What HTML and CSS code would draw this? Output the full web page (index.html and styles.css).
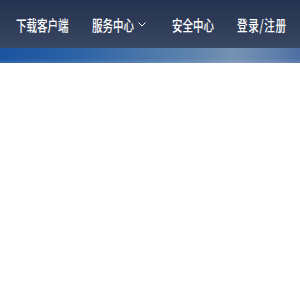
FILE: index.html
```html
<!DOCTYPE html>
<html lang="zh-CN">
<head>
<meta charset="utf-8">
<link rel="stylesheet" href="styles.css">
</head>
<body>
<header class="topbar">
  <nav class="nav">
    <a class="nav-item w-download"><span class="label">下载客户端</span></a>
    <a class="nav-item w-service"><span class="label">服务中心</span><svg class="chev" width="8" height="5" viewBox="0 0 8 5"><path d="M0.5 0.5 L4 4 L7.5 0.5" fill="none" stroke="#fff" stroke-width="1"/></svg></a>
    <a class="nav-item w-safe"><span class="label">安全中心</span></a>
    <a class="nav-item w-login"><span class="label">登录/注册</span></a>
  </nav>
</header>
<div class="banner"></div>
<main class="content"></main>
</body>
</html>
```
FILE: styles.css
```css
* { box-sizing: border-box; }
html, body { margin: 0; padding: 0; background: #fff; }
body { font-family: "Noto Sans CJK SC", "Noto Sans", sans-serif; }
.topbar {
  height: 48px;
  background: linear-gradient(180deg, #253250 0%, #2f3c58 50%, #3a4763 100%);
}
.nav {
  display: flex;
  align-items: center;
  height: 48px;
  padding-left: 16px;
}
.nav-item {
  display: flex;
  align-items: center;
  color: #fff;
  font-size: 15px;
  font-weight: 500;
  line-height: 1;
  text-decoration: none;
  white-space: nowrap;
}
.label {
  display: inline-block;
  transform: scaleX(0.7);
  transform-origin: left center;
}
.w-download { width: 76px; }
.w-service { width: 80px; }
.w-safe { width: 65px; }
.w-login { width: 60px; }
.w-service .label { width: 44px; }
.chev { margin-left: 2px; margin-top: 1px; }
.w-login .label { letter-spacing: 1px; }
.banner {
  height: 15px;
  background:
    linear-gradient(180deg, rgba(255,255,255,0) 70%, rgba(255,255,255,0.12) 100%),
    linear-gradient(90deg, #1a53a0 0%, #2c62a6 25%, #4673a9 45%, #5f84ad 65%, #7592b2 78%, #6282ad 90%, #4e6fa2 100%);
}
.content { height: 237px; }
```
